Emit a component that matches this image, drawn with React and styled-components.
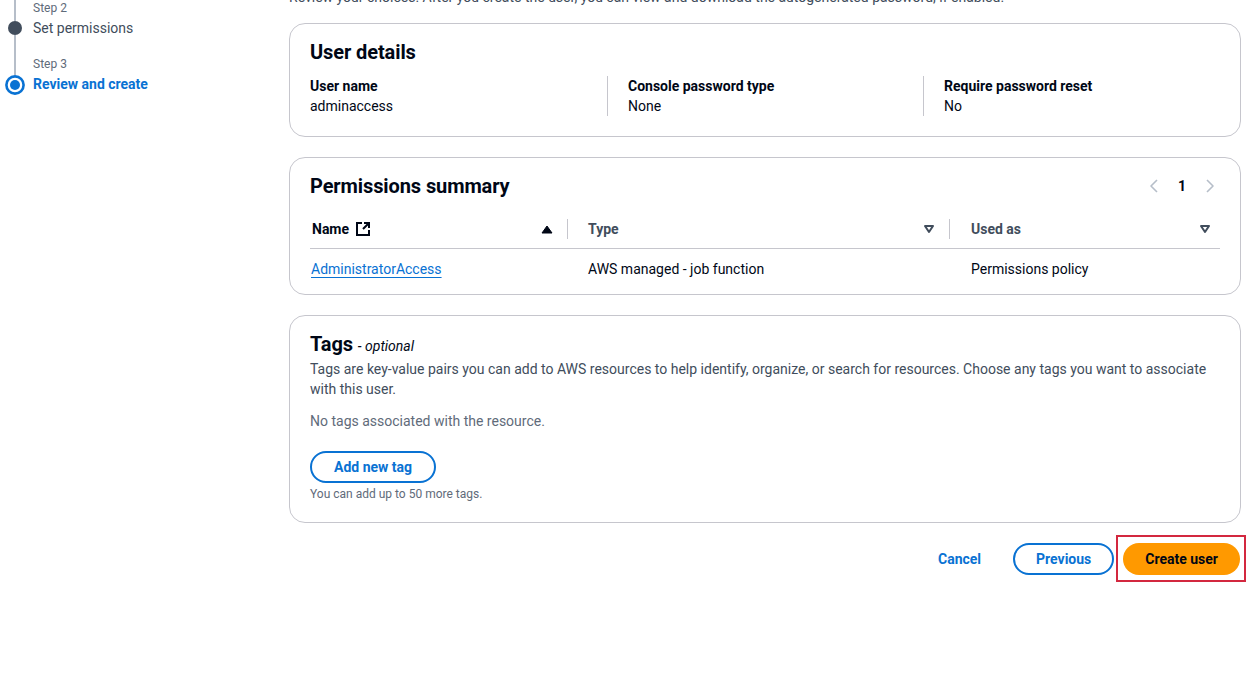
import styled, { createGlobalStyle } from "styled-components";

const GlobalStyle = createGlobalStyle`
    * {
        box-sizing: border-box;
    }
    body {
        margin: 0;
        background: #ffffff;
        font-family: Roboto, "Liberation Sans", Arial, sans-serif;
        font-size: 14px;
        line-height: 20px;
        color: #000716;
    }
`;

const Page = styled.div`
    display: grid;
    grid-template-columns: 289px 952px;
    margin-top: -13px;
    padding-bottom: 80px;
`;

/* ---------- left wizard navigation ---------- */

const Nav = styled.nav`
    padding-top: 12px;
`;

const Step = styled.div`
    display: flex;
`;

const Rail = styled.div`
    width: 30px;
    display: flex;
    flex-direction: column;
    align-items: center;
`;

const RailLine = styled.div`
    width: 2px;
    background: #b6bec9;
    height: ${({ $h }) => ($h ? `${$h}px` : "auto")};
    flex: ${({ $h }) => ($h ? "none" : "1")};
`;

const Dot = styled.div`
    width: 14px;
    height: 14px;
    border-radius: 50%;
    background: #414d5c;
`;

const StepText = styled.div`
    padding-left: 3px;
    padding-bottom: ${({ $last }) => ($last ? "0" : "17px")};
`;

const StepLabel = styled.div`
    font-size: 12px;
    line-height: 16px;
    color: #5f6b7a;
    padding-top: 1px;
    margin-bottom: 2px;
`;

const StepTitle = styled.div`
    font-size: 14px;
    line-height: 20px;
    color: ${({ $active }) => ($active ? "#0972d3" : "#414d5c")};
    font-weight: ${({ $active }) => ($active ? 700 : 400)};
`;

const ActiveRing = () => (
    <svg width="20" height="20" viewBox="0 0 20 20">
        <circle cx="10" cy="10" r="8.6" fill="none" stroke="#0972d3" strokeWidth="2.6" />
        <circle cx="10" cy="10" r="5" fill="#0972d3" />
    </svg>
);

/* ---------- main content ---------- */

const Main = styled.main`
    display: flex;
    flex-direction: column;
`;

const Intro = styled.p`
    margin: 0 0 16px;
    color: #414d5c;
    font-size: 14px;
    line-height: 20px;
`;

const Card = styled.section`
    border: 1px solid #c6c6cd;
    border-radius: 16px;
    padding: ${({ $pad }) => $pad || "16px 20px 20px"};
    margin-bottom: 20px;
    background: #ffffff;
`;

const CardHeader = styled.div`
    display: flex;
    align-items: center;
    justify-content: space-between;
`;

const Heading = styled.h2`
    margin: 0;
    font-size: 20px;
    line-height: 24px;
    font-weight: 700;
    color: #000716;
    letter-spacing: -0.1px;
`;

const Optional = styled.span`
    font-size: 14px;
    font-weight: 400;
    font-style: italic;
    letter-spacing: 0;
`;

const Columns = styled.div`
    display: grid;
    grid-template-columns: 297px 316px 1fr;
    margin-top: 12px;
`;

const Column = styled.div`
    padding-left: ${({ $first }) => ($first ? "0" : "20px")};
    border-left: ${({ $first }) => ($first ? "none" : "1px solid #c6c6cd")};
`;

const Label = styled.div`
    font-weight: 700;
    color: #000716;
`;

const Value = styled.div`
    color: #000716;
`;

/* pagination */

const Pager = styled.div`
    display: flex;
    align-items: center;
    margin-right: -4px;
`;

const PagerItem = styled.div`
    width: 28px;
    height: 24px;
    display: flex;
    align-items: center;
    justify-content: center;
    font-weight: 700;
    color: #000716;
`;

const Chevron = ({ dir }) => (
    <svg width="16" height="16" viewBox="0 0 16 16">
        <path
            d={dir === "left" ? "M11 2 5 8l6 6" : "M5 2l6 6-6 6"}
            fill="none"
            stroke="#b6bec9"
            strokeWidth="1.6"
            strokeLinejoin="round"
        />
    </svg>
);

/* table */

const Table = styled.div`
    margin-top: 12px;
`;

const Row = styled.div`
    display: grid;
    grid-template-columns: 258px 382px 1fr;
    border-bottom: ${({ $head }) => ($head ? "1px solid #c6c6cd" : "none")};
`;

const HeadCell = styled.div`
    height: 38px;
    display: flex;
    align-items: center;
    padding-left: ${({ $pl }) => $pl}px;
    padding-right: ${({ $pr }) => $pr || 0}px;
    font-weight: 700;
    color: ${({ $sorted }) => ($sorted ? "#000716" : "#414d5c")};
`;

const HeadLabel = styled.span`
    flex: 1;
    display: flex;
    align-items: center;
    gap: 6px;
`;

const HeadDivider = styled.span`
    width: 1px;
    height: 20px;
    background: #c6c6cd;
    margin-left: 14px;
`;

const Cell = styled.div`
    height: 40px;
    display: flex;
    align-items: center;
    padding-left: ${({ $pl }) => $pl}px;
    color: #000716;
`;

const Link = styled.a`
    color: #0972d3;
    text-decoration: underline;
    text-underline-offset: 3px;
    text-decoration-thickness: 1px;
    cursor: pointer;
`;

const ExternalIcon = () => (
    <svg width="16" height="16" viewBox="0 0 16 16">
        <path d="M7 2H2v12h12V9" fill="none" stroke="#000716" strokeWidth="2" />
        <path d="M9 2h5v5M14 2 8 8" fill="none" stroke="#000716" strokeWidth="2" />
    </svg>
);

const SortUp = () => (
    <svg width="12" height="10" viewBox="0 0 12 10">
        <path d="M1 9h10L6 2z" fill="#000716" stroke="#000716" strokeWidth="1" strokeLinejoin="round" />
    </svg>
);

const SortDown = () => (
    <svg width="12" height="10" viewBox="0 0 12 10">
        <path d="M2 2h8L6 8z" fill="none" stroke="#414d5c" strokeWidth="2" strokeLinejoin="round" />
    </svg>
);

/* tags */

const Description = styled.p`
    margin: 1px 0 0;
    color: #414d5c;
`;

const Empty = styled.p`
    margin: 12px 0 0;
    color: #5f6b7a;
`;

const Button = styled.button`
    height: 32px;
    padding: 0 ${({ $pad }) => $pad || 20}px;
    border-radius: 20px;
    border: 2px solid ${({ $variant }) => ($variant === "normal" ? "#0972d3" : "transparent")};
    background: ${({ $variant }) => ($variant === "primary" ? "#ff9900" : "#ffffff")};
    color: ${({ $variant }) => ($variant === "primary" ? "#000716" : "#0972d3")};
    font-family: inherit;
    font-size: 14px;
    font-weight: 700;
    line-height: 20px;
    cursor: pointer;
`;

const AddTag = styled(Button)`
    margin-top: 20px;
    align-self: flex-start;
`;

const Hint = styled.div`
    margin-top: 3px;
    font-size: 12px;
    line-height: 16px;
    color: #5f6b7a;
`;

const TagsBody = styled.div`
    display: flex;
    flex-direction: column;
`;

/* footer */

const Actions = styled.div`
    display: flex;
    justify-content: flex-end;
    align-items: center;
    gap: 9px;
    padding-right: 1px;
`;

const Highlight = styled.div`
    position: relative;
    display: flex;

    &::after {
        content: "";
        position: absolute;
        top: -8px;
        left: -7px;
        right: -6px;
        bottom: -7px;
        border: 2px solid #d3283f;
        pointer-events: none;
    }
`;

const steps = [
    { n: 2, title: "Set permissions" },
    { n: 3, title: "Review and create", active: true },
];

const App = () => {
    return (
        <>
            <GlobalStyle />
            <Page>
                <Nav>
                    {steps.map((s, i) => {
                        const last = i === steps.length - 1;
                        return (
                            <Step key={s.n}>
                                <Rail>
                                    <RailLine $h={s.active ? 20 : 22} />
                                    {s.active ? <ActiveRing /> : <Dot />}
                                    {!last && <RailLine />}
                                </Rail>
                                <StepText $last={last}>
                                    <StepLabel>Step {s.n}</StepLabel>
                                    <StepTitle $active={s.active}>{s.title}</StepTitle>
                                </StepText>
                            </Step>
                        );
                    })}
                </Nav>

                <Main>
                    <Intro>
                        Review your choices. After you create the user, you can view and download the autogenerated password, if enabled.
                    </Intro>

                    <Card $pad="16px 20px 20px">
                        <Heading>User details</Heading>
                        <Columns>
                            <Column $first>
                                <Label>User name</Label>
                                <Value>adminaccess</Value>
                            </Column>
                            <Column>
                                <Label>Console password type</Label>
                                <Value>None</Value>
                            </Column>
                            <Column>
                                <Label>Require password reset</Label>
                                <Value>No</Value>
                            </Column>
                        </Columns>
                    </Card>

                    <Card $pad="16px 20px 5px">
                        <CardHeader>
                            <Heading>Permissions summary</Heading>
                            <Pager>
                                <PagerItem><Chevron dir="left" /></PagerItem>
                                <PagerItem>1</PagerItem>
                                <PagerItem><Chevron dir="right" /></PagerItem>
                            </Pager>
                        </CardHeader>
                        <Table>
                            <Row $head>
                                <HeadCell $pl={2} $sorted>
                                    <HeadLabel>Name <ExternalIcon /></HeadLabel>
                                    <SortUp />
                                    <HeadDivider />
                                </HeadCell>
                                <HeadCell $pl={20}>
                                    <HeadLabel>Type</HeadLabel>
                                    <SortDown />
                                    <HeadDivider />
                                </HeadCell>
                                <HeadCell $pl={21} $pr={9}>
                                    <HeadLabel>Used as</HeadLabel>
                                    <SortDown />
                                </HeadCell>
                            </Row>
                            <Row>
                                <Cell $pl={1}>
                                    <Link>AdministratorAccess</Link>
                                </Cell>
                                <Cell $pl={20}>AWS managed - job function</Cell>
                                <Cell $pl={21}>Permissions policy</Cell>
                            </Row>
                        </Table>
                    </Card>

                    <Card $pad="16px 20px 20px">
                        <TagsBody>
                            <Heading>
                                Tags <Optional>- optional</Optional>
                            </Heading>
                            <Description>
                                Tags are key-value pairs you can add to AWS resources to help identify, organize, or search for resources. Choose any tags you want to associate with this user.
                            </Description>
                            <Empty>No tags associated with the resource.</Empty>
                            <AddTag $variant="normal" $pad={22}>Add new tag</AddTag>
                            <Hint>You can add up to 50 more tags.</Hint>
                        </TagsBody>
                    </Card>

                    <Actions>
                        <Button $variant="link" $pad={21}>Cancel</Button>
                        <Button $variant="normal" $pad={21}>Previous</Button>
                        <Highlight>
                            <Button $variant="primary" $pad={20}>Create user</Button>
                        </Highlight>
                    </Actions>
                </Main>
            </Page>
        </>
    );
};

export default App;
